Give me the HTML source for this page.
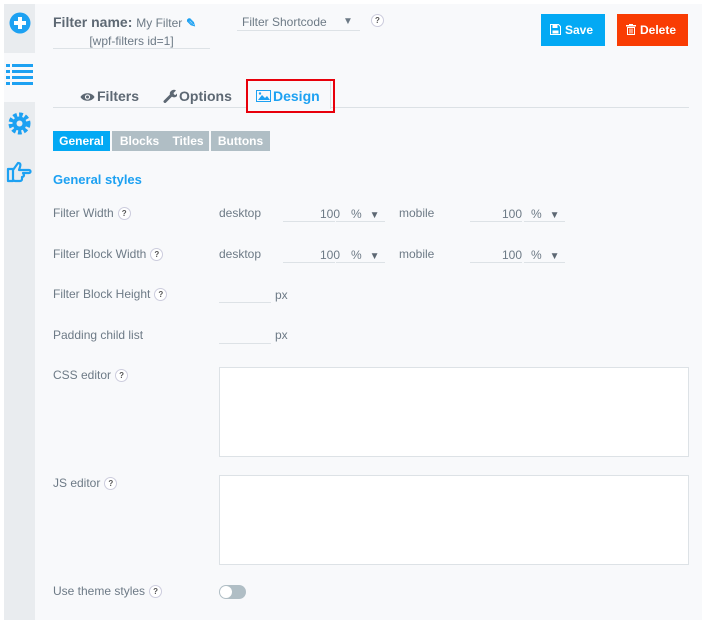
<!DOCTYPE html><html><head><style>
*{box-sizing:border-box;margin:0;padding:0}
body{width:702px;height:620px;background:#fff;font-family:"Liberation Sans",sans-serif;color:#6d7a86;position:relative;overflow:hidden;font-size:12px}
.a{position:absolute}
.main{left:35px;top:4px;width:667px;height:616px;background:#f8f9fb}
.side{left:4px;top:4px;width:31px;height:616px;background:#e9ecef}
.q{display:inline-block;width:13px;height:13px;border:1px solid #ccd;border-radius:50%;font-size:8px;font-weight:bold;text-align:center;line-height:11px;color:#555;background:#fff;vertical-align:middle;margin-left:4px}
.lbl{left:53px;font-size:12px;color:#6d7a86}
.ul{border-bottom:1px solid #dde2e6;height:1px}
.sub{top:131px;height:20px;color:#fff;font-weight:bold;font-size:12px;line-height:20px;text-align:center;background:#b0bec5}
.ta{left:219px;width:470px;background:#fff;border:1px solid #dde2e6}
.ar{font-size:10px;margin-left:8px;color:#5d6873}
.tab{top:88px;font-size:14px;font-weight:bold;color:#5d6873}
</style></head><body>
<div class="a main"></div>
<div class="a side"></div>
<div class="a" style="left:4px;top:53px;width:31px;height:49px;background:#f8f9fb"></div>
<svg class="a" style="left:9px;top:12px" width="22" height="22"><circle cx="11" cy="11" r="10.5" fill="#1da1f2"/><rect x="5" y="9" width="12" height="4" fill="#fff"/><rect x="9" y="5" width="4" height="12" fill="#fff"/></svg>
<svg class="a" style="left:6px;top:63px" width="28" height="22" fill="#1da1f2"><rect x="0" y="1" width="4" height="3"/><rect x="6" y="1" width="21" height="3"/><rect x="0" y="7" width="4" height="3"/><rect x="6" y="7" width="21" height="3"/><rect x="0" y="13" width="4" height="3"/><rect x="6" y="13" width="21" height="3"/><rect x="0" y="19" width="4" height="3"/><rect x="6" y="19" width="21" height="3"/></svg>
<svg class="a" style="left:8px;top:112px" width="23" height="23"><circle cx="11.5" cy="11.5" r="8" fill="none" stroke="#1da1f2" stroke-width="6" stroke-dasharray="3.3 2"/><circle cx="11.5" cy="11.5" r="7" fill="#1da1f2"/><circle cx="11.5" cy="11.5" r="3" fill="#e9ecef"/></svg>
<svg class="a" style="left:6px;top:160px" width="28" height="24"><path d="M2 9h5v12H2zM7 10l5-7c2 0 3 1 2 4l-1 3h10c2 0 2 3 0 3h-6l1 2c0 2-2 2-2 2v2c0 2-2 2-2 2H9c-1 0-2-1-2-2" fill="none" stroke="#1da1f2" stroke-width="2.2" stroke-linejoin="round"/></svg>
<div class="a" style="left:53px;top:14px;font-size:14px;font-weight:bold;color:#5d6873">Filter name: <span style="font-weight:normal;font-size:12px;color:#6d7a86">My Filter</span> <span style="color:#1da1f2;font-size:12px">✎</span></div>
<div class="a" style="left:53px;top:34px;width:157px;text-align:center;font-size:12px">[wpf-filters id=1]</div>
<div class="a ul" style="left:53px;top:48px;width:157px"></div>
<div class="a" style="left:242px;top:15px;font-size:12px">Filter Shortcode</div>
<div class="a" style="left:343px;top:16px;font-size:10px;color:#6d7a86">▼</div>
<div class="a ul" style="left:237px;top:30px;width:123px"></div>
<div class="a" style="left:367px;top:13px"><span class="q">?</span></div>
<div class="a" style="left:541px;top:14px;width:64px;height:32px;background:#03a9f4"></div>
<svg class="a" style="left:550px;top:24px" width="11" height="11"><path d="M.5 .5h8l2 2v8H.5z" fill="none" stroke="#fff"/><rect x="2.5" y="1" width="5" height="3" fill="#fff"/><rect x="2.5" y="6.5" width="6" height="3" fill="#fff"/></svg>
<div class="a" style="left:565px;top:23px;color:#fff;font-weight:bold;font-size:12px">Save</div>
<div class="a" style="left:617px;top:14px;width:71px;height:32px;background:#f93c03"></div>
<svg class="a" style="left:626px;top:24px" width="10" height="11"><rect x="0" y="1" width="10" height="1.5" fill="#fff"/><rect x="3" y="0" width="4" height="1.5" fill="#fff"/><path d="M1.5 3.5h7v7h-7z" fill="none" stroke="#fff"/><path d="M4 4.5v5M6 4.5v5" stroke="#fff"/></svg>
<div class="a" style="left:640px;top:23px;color:#fff;font-weight:bold;font-size:12px">Delete</div>
<div class="a ul" style="left:53px;top:107px;width:636px;border-color:#dce1e5"></div>
<svg class="a" style="left:80px;top:92px" width="15" height="10"><path d="M.5 5C3 0 12 0 14.5 5 12 10 3 10 .5 5z" fill="#5d6873"/><circle cx="7.5" cy="5" r="2.6" fill="#f8f9fb"/><circle cx="7.5" cy="5" r="1.5" fill="#5d6873"/></svg>
<div class="a tab" style="left:97px">Filters</div>
<svg class="a" style="left:163px;top:89px" width="14" height="14"><path d="M2 12.5L8 6.5" stroke="#5d6873" stroke-width="3" stroke-linecap="round"/><path d="M7 6a4 4 0 0 1 6-4.5l-2.5 2.5 .5 1.5 1.5.5L15 3.5A4 4 0 0 1 9.5 8z" fill="#5d6873"/></svg>
<div class="a tab" style="left:179px">Options</div>
<div class="a" style="left:246px;top:79px;width:89px;height:34px;border:2px solid #e8000b"></div>
<div class="a" style="left:248px;top:81px;width:83px;height:28px;border-right:1px solid #dde2e6;background:#f8f9fb"></div>
<svg class="a" style="left:256px;top:90px" width="15" height="12"><rect x=".5" y=".5" width="14" height="11" fill="none" stroke="#1da1f2"/><path d="M2 10l4-5 3 3 2-2 3 4z" fill="#1da1f2"/><circle cx="4" cy="3.5" r="1.2" fill="#1da1f2"/></svg>
<div class="a tab" style="left:273px;color:#1da1f2">Design</div>
<div class="a sub" style="left:53px;width:57px;background:#03a9f4">General</div>
<div class="a sub" style="left:112px;width:55px">Blocks</div>
<div class="a sub" style="left:167px;width:42px">Titles</div>
<div class="a sub" style="left:211px;width:59px">Buttons</div>
<div class="a" style="left:53px;top:172px;font-size:13px;font-weight:bold;color:#1da1f2">General styles</div>

<div class="a lbl" style="top:206px">Filter Width<span class="q">?</span></div>
<div class="a lbl" style="top:247px">Filter Block Width<span class="q">?</span></div>
<div class="a lbl" style="top:287px">Filter Block Height<span class="q">?</span></div>
<div class="a lbl" style="top:328px">Padding child list</div>
<div class="a lbl" style="top:368px">CSS editor<span class="q">?</span></div>
<div class="a lbl" style="top:476px">JS editor<span class="q">?</span></div>
<div class="a lbl" style="top:584px">Use theme styles<span class="q">?</span></div>

<div class="a" style="left:219px;top:206px">desktop</div><div class="a" style="left:219px;top:247px">desktop</div>
<div class="a" style="left:399px;top:206px">mobile</div><div class="a" style="left:399px;top:247px">mobile</div>
<div class="a" style="left:283px;top:207px;width:57px;text-align:right">100</div><div class="a" style="left:283px;top:248px;width:57px;text-align:right">100</div>
<div class="a" style="left:470px;top:207px;width:52px;text-align:right">100</div><div class="a" style="left:470px;top:248px;width:52px;text-align:right">100</div>
<div class="a" style="left:351px;top:207px">%<span class="ar">▼</span></div><div class="a" style="left:351px;top:248px">%<span class="ar">▼</span></div>
<div class="a" style="left:531px;top:207px">%<span class="ar">▼</span></div><div class="a" style="left:531px;top:248px">%<span class="ar">▼</span></div>
<div class="a ul" style="left:283px;top:221px;width:52px"></div><div class="a ul" style="left:336px;top:221px;width:49px"></div>
<div class="a ul" style="left:470px;top:221px;width:52px"></div><div class="a ul" style="left:524px;top:221px;width:41px"></div>
<div class="a ul" style="left:283px;top:262px;width:52px"></div><div class="a ul" style="left:336px;top:262px;width:49px"></div>
<div class="a ul" style="left:470px;top:262px;width:52px"></div><div class="a ul" style="left:524px;top:262px;width:41px"></div>
<div class="a ul" style="left:219px;top:302px;width:52px"></div><div class="a" style="left:275px;top:288px">px</div>
<div class="a ul" style="left:219px;top:343px;width:52px"></div><div class="a" style="left:275px;top:328px">px</div>
<div class="a ta" style="top:367px;height:90px"></div>
<div class="a ta" style="top:475px;height:90px"></div>
<div class="a" style="left:219px;top:585px;width:27px;height:14px;border-radius:7px;background:#b0bec5"></div>
<div class="a" style="left:220px;top:586px;width:12px;height:12px;border-radius:50%;background:#fff"></div>
</body></html>
